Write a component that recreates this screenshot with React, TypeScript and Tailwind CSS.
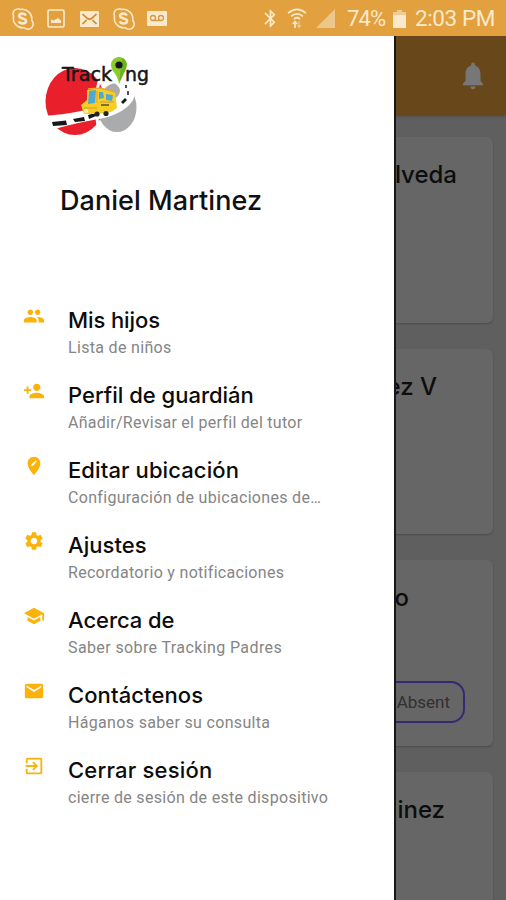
import type { IconType } from 'react-icons';
import {
  MdBluetooth,
  MdEditLocation,
  MdEmail,
  MdExitToApp,
  MdNotifications,
  MdPeople,
  MdPersonAdd,
  MdSchool,
  MdSettings,
} from 'react-icons/md';

interface MenuItem {
  icon: IconType;
  title: string;
  subtitle: string;
  titleClass: string;
  subtitleClass: string;
}

const menu: MenuItem[] = [
  { icon: MdPeople, title: 'Mis hijos', subtitle: 'Lista de niños', titleClass: 'tracking-[-0.1px]', subtitleClass: 'tracking-[0.32px]' },
  { icon: MdPersonAdd, title: 'Perfil de guardián', subtitle: 'Añadir/Revisar el perfil del tutor', titleClass: 'tracking-[0px]', subtitleClass: 'tracking-[0.28px]' },
  { icon: MdEditLocation, title: 'Editar ubicación', subtitle: 'Configuración de ubicaciones de…', titleClass: 'tracking-[0.1px]', subtitleClass: 'tracking-[0.32px]' },
  { icon: MdSettings, title: 'Ajustes', subtitle: 'Recordatorio y notificaciones', titleClass: 'tracking-[0.05px]', subtitleClass: 'tracking-[0.3px]' },
  { icon: MdSchool, title: 'Acerca de', subtitle: 'Saber sobre Tracking Padres', titleClass: 'tracking-[-0.05px]', subtitleClass: 'tracking-[0.39px]' },
  { icon: MdEmail, title: 'Contáctenos', subtitle: 'Háganos saber su consulta', titleClass: 'tracking-[0.1px]', subtitleClass: 'tracking-[0.33px]' },
  { icon: MdExitToApp, title: 'Cerrar sesión', subtitle: 'cierre de sesión de este dispositivo', titleClass: 'tracking-[0.2px]', subtitleClass: 'tracking-[0.3px]' },
];

function SkypeIcon() {
  return (
    <svg viewBox="0 0 24 24" className="h-[23px] w-[23px] shrink-0">
      <path
        d="M7 2a5 5 0 0 0-4.300 7.400A10 10 0 0 0 14 21.600 5.300 5.300 0 0 0 21.600 14 10 10 0 0 0 10 2.600 5 5 0 0 0 7 2Z"
        fill="none"
        stroke="currentColor"
        strokeWidth="1.600"
      />
      <path
        d="M15.500 8.800C14.800 7.300 13.600 6.900 12 6.900c-2 0-3.500.9-3.500 2.500 0 3.400 7.200 1.700 7.200 5.200 0 1.700-1.700 2.600-3.700 2.600-1.900 0-3.200-.7-3.900-2.300"
        fill="none"
        stroke="currentColor"
        strokeWidth="2.700"
      />
    </svg>
  );
}

function StatusBar() {
  return (
    <div className="flex h-9 shrink-0 items-center bg-[#e2a03e] pt-px text-[#fbe9cb]">
      <div className="flex flex-1 items-center pl-[11px]">
        <SkypeIcon />
        <svg viewBox="0 0 18 19" className="ml-[13px] h-[19px] w-[18px]">
          <rect x="1" y="1" width="16" height="17" rx="1.500" fill="none" stroke="currentColor" strokeWidth="1.700" />
          <path d="M4 14V10.500l2.500 1L11 9l3 2.500V14Z" fill="currentColor" />
        </svg>
        <svg viewBox="0 0 19 16" className="ml-[15px] h-4 w-[19px]">
          <rect width="19" height="16" rx="1" fill="currentColor" />
          <path d="M2.500 3 7 7.200Q9.500 9 12 7.200L16.500 3M2.500 13l4-4M16.500 13l-4-4" fill="none" stroke="#c98b35" strokeWidth="1.700" />
        </svg>
        <div className="ml-[13px] flex">
          <SkypeIcon />
        </div>
        <svg viewBox="0 0 20 15" className="ml-3 h-[15px] w-5">
          <rect width="20" height="15" rx="1" fill="currentColor" />
          <g fill="none" stroke="#d39a48" strokeWidth="1.300">
            <circle cx="6" cy="7" r="2.500" />
            <circle cx="14" cy="7" r="2.500" />
            <path d="M6 9.500h8" />
          </g>
        </svg>
      </div>
      <MdBluetooth className="h-[21px] w-[21px]" />
      <svg viewBox="0 0 20 21" className="ml-[6px] h-[21px] w-5">
        <g fill="none" stroke="currentColor" strokeWidth="1.700">
          <path d="M1 5.200Q10-2.500 19 5.200M4 8.300Q10 3.300 16 8.300M7 11Q10 8.500 13 11" />
          <path d="M8 20v-6M5.800 16 8 13.500l2.200 2.500" />
        </g>
        <path d="M12 13v6M10.500 17l1.500 2.500 1.800-2.500" fill="none" stroke="#edc68b" strokeWidth="1.300" />
      </svg>
      <svg viewBox="0 0 19 19" className="ml-[9px] h-[19px] w-[19px]">
        <path d="M19 0v19H0Z" fill="#edc68b" />
      </svg>
      <span className="ml-3 w-[41px] font-['Roboto',sans-serif] text-[22px] leading-none tracking-[-0.8px]">74%</span>
      <svg viewBox="0 0 13 18" className="ml-[5px] h-[18px] w-[13px]">
        <path d="M4 0h5v2h4v16H0V2h4Z" fill="currentColor" />
        <path d="M4 0h5v2h4v3H0V2h4Z" fill="#efcc94" />
      </svg>
      <span className="ml-[9px] mr-[11px] font-['Roboto',sans-serif] text-[22.500px] leading-none tracking-[-0.4px] whitespace-nowrap">2:03 PM</span>
    </div>
  );
}

function Logo() {
  return (
    <svg viewBox="0 0 130 95" className="h-[95px] w-[130px]">
      <ellipse cx="40" cy="51.500" rx="29.500" ry="33.500" fill="#e9202b" />
      <ellipse cx="82" cy="57.500" rx="19.500" ry="24.500" fill="#aaabad" />
      <path d="M64 31Q60 48 62 60 61 74 66 82" fill="none" stroke="#fff" strokeWidth="3" />
      {/* road */}
      <path d="M6 66Q50 64 78 50 92 41 78 32L88 26Q104 36 98 50 91 62 69 68 35 74 17 80Z" fill="#fff" />
      <path d="M17 72 31 70.500 32 75 18 76ZM38 69 49 67 50 71 40 72ZM53 65 60 63 61 66 54 69ZM86 52 90 48 92 50 88 54Z" fill="#181818" />
      <path d="M91 35v3M93 41v4" stroke="#181818" strokeWidth="1.500" />
      {/* school bus */}
      <path d="M46 55 52 50 52 40 65 38 80 42 82 58 76 62 63 64 49 64Z" fill="#f8ce24" />
      <path d="M54 41 61 40 60 53 53 54ZM64 42 68 42 69 48 64 49ZM71 44 78 45 77 51 71 50Z" fill="#4fa9d1" />
      <path d="M53 39 65 38 80 42M62 41v12M49 58h13M65 52h14" fill="none" stroke="#e4aa2a" strokeWidth="1.300" />
      <path d="M66 55h8" stroke="#55502b" strokeWidth="1.500" />
      <circle cx="51" cy="61" r="2.300" fill="#fff193" />
      <circle cx="62" cy="64" r="2.600" fill="#252525" />
      <circle cx="71" cy="63.500" r="2.600" fill="#252525" />
      <g fill="#171717" stroke="#171717" strokeWidth="0.500" className="font-['DejaVu_Sans',sans-serif] text-[19px]">
        <text x="27" y="31" textLength="50" lengthAdjust="spacingAndGlyphs">Track</text>
        <text x="90" y="31" textLength="24" lengthAdjust="spacingAndGlyphs">ng</text>
      </g>
      {/* map pin */}
      <path d="M84 34Q83 27 78 21C73 12 79 7 84 7S95 12 90 21Q85 27 84 34Z" fill="#8bcb2c" />
      <path d="M84 34Q88 25 90 21C94 13 90 9 87 8Z" fill="#69b323" />
      <circle cx="84" cy="15" r="3.600" fill="#171717" />
    </svg>
  );
}

function DrawerItem({ icon: Icon, title, subtitle, titleClass, subtitleClass }: MenuItem) {
  return (
    <div className="flex h-[75px] items-start pl-[23px]">
      <Icon className="mt-[5px] h-[22px] w-[22px] shrink-0 text-[#fbb20b]" />
      <div className="ml-[23px] whitespace-nowrap">
        <div className={`mt-[6px] font-['Inter',sans-serif] text-[22px] leading-7 font-medium text-[#0c0c0c] ${titleClass}`}>{title}</div>
        <div className={`mt-[2px] font-['Roboto',sans-serif] text-[16px] leading-6 text-[#858585] ${subtitleClass}`}>{subtitle}</div>
      </div>
    </div>
  );
}

function Drawer() {
  return (
    <nav className="w-[394px] shrink-0 bg-white">
      <div className="pt-[14px] pl-[35px]">
        <Logo />
      </div>
      <h1 className="mt-10 ml-[60px] h-8 font-['Inter',sans-serif] text-[27px] leading-8 font-medium tracking-[0.05px] whitespace-nowrap text-[#111]">Daniel Martinez</h1>
      <div className="mt-[83px]">
        {menu.map((item) => (
          <DrawerItem key={item.title} {...item} />
        ))}
      </div>
    </nav>
  );
}

function ChildCard({ name, nameClass, absent }: { name: string; nameClass: string; absent?: boolean }) {
  return (
    <div className="mr-[13px] flex h-[185.500px] shrink-0 flex-col items-end rounded-r-[6px] bg-[#666] pt-[22px] shadow-[0_1px_2px_#4b4b4b]">
      <div className={`font-['Inter',sans-serif] text-[24px] leading-8 font-medium whitespace-nowrap text-[#0d0d0d] ${nameClass}`}>{name}</div>
      {absent && (
        <div className="mt-[67px] mr-7 flex h-[42px] w-[70px] items-center justify-end rounded-r-[14px] border-2 border-l-0 border-[#342a72] pt-px pr-[13px] font-['Roboto',sans-serif] text-[17px] text-[#303030]">
          Absent
        </div>
      )}
    </div>
  );
}

export default function App() {
  return (
    <div className="flex h-[900px] w-[506px] flex-col overflow-hidden bg-white">
      <StatusBar />
      <div className="flex min-h-0 flex-1">
        <Drawer />
        <main className="flex flex-1 flex-col overflow-hidden border-l-2 border-[#181818] bg-[#5f5f5f]">
          <header className="flex h-[79px] shrink-0 items-center justify-end bg-[#68481b] pr-[18px] shadow-[0_1px_3px_#444]">
            <MdNotifications className="h-[33px] w-[30px] text-[#777]" preserveAspectRatio="none" />
          </header>
          <div className="mt-[22px] flex flex-col gap-[26px]">
            <ChildCard name="lveda" nameClass="mr-9" />
            <ChildCard name="ez V" nameClass="mr-14" />
            <ChildCard name="o" nameClass="mr-[84px]" absent />
            <ChildCard name="inez" nameClass="mr-12" />
          </div>
        </main>
      </div>
    </div>
  );
}
